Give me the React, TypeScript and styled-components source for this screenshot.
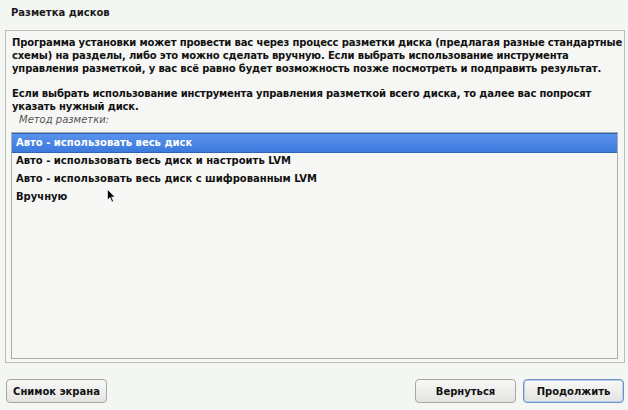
import React from "react";
import styled, { createGlobalStyle } from "styled-components";

const Global = createGlobalStyle`
  html, body { margin: 0; padding: 0; background: #f4f6f3; }
  body { font-family: "DejaVu Sans", "Liberation Sans", sans-serif; }
`;

const Screen = styled.div`
  position: relative;
  width: 628px;
  height: 410px;
  display: flex;
  flex-direction: column;
  background: #f4f6f3;
  color: #111;
  font-size: 10px;
  overflow: hidden;
`;

const Title = styled.div`
  height: 24px;
  line-height: 24px;
  padding: 1px 0 0 11px;
  font-weight: bold;
  font-size: 10px;
  color: #1a1a1a;
`;

const Panel = styled.div`
  margin: 5px 3px 0 5px;
  height: 333px;
  box-sizing: border-box;
  border: 1px solid #b9bcb8;
  background: #f6f7f5;
  display: flex;
  flex-direction: column;
  padding: 5px 6px 3px 5px;
`;

const Para = styled.p<{ $gap?: number }>`
  margin: 0 0 ${(p) => p.$gap ?? 0}px 1px;
  font-weight: bold;
  line-height: 13px;
  letter-spacing: -0.15px;
  white-space: nowrap;
  color: #111;
`;

const Label = styled.div`
  font-style: italic;
  color: #555;
  line-height: 13px;
  padding-left: 8px;
  margin-top: 0px;
  margin-bottom: 6px;
`;

const List = styled.div`
  flex: 1;
  border: 1px solid #a9aca8;
  background: #f7f7f5;
  padding: 0;
  display: flex;
  flex-direction: column;
`;

const Item = styled.div<{ $selected?: boolean }>`
  height: 18px;
  line-height: 18px;
  padding-left: 4px;
  font-weight: bold;
  color: ${(p) => (p.$selected ? "#fff" : "#111")};
  background: ${(p) =>
    p.$selected ? "linear-gradient(#5a93ec, #3b79dd)" : "transparent"};
  border-top: 1px solid ${(p) => (p.$selected ? "#2f63b5" : "transparent")};
  border-bottom: 1px solid ${(p) => (p.$selected ? "#2f63b5" : "transparent")};
  margin-bottom: -2px;
  margin-top: 0;
`;

const ButtonRow = styled.div`
  display: flex;
  align-items: center;
  margin-top: 16px;
  padding: 0 4px 0 6px;
  gap: 7px;
`;

const Spacer = styled.div`
  flex: 1;
`;

const Button = styled.button<{ $focused?: boolean }>`
  width: 101px;
  height: 24px;
  box-sizing: border-box;
  font-family: "DejaVu Sans", "Liberation Sans", sans-serif;
  font-size: 10px;
  font-weight: bold;
  color: #111;
  border: 1px solid ${(p) => (p.$focused ? "#6d94c7" : "#a6a8a5")};
  border-radius: 4px;
  background: linear-gradient(#f8f8f7, #e3e3e1);
  box-shadow: ${(p) => (p.$focused ? "inset 0 0 0 1px #b9cde6" : "none")};
  padding: 0;
`;

const Cursor = styled.svg`
  position: absolute;
  left: 107px;
  top: 189px;
`;

export default function App() {
  return (
    <Screen>
      <Global />
      <Title>Разметка дисков</Title>
      <Panel>
        <Para $gap={12}>
          Программа установки может провести вас через процесс разметки диска (предлагая разные стандартные
          <br />
          схемы) на разделы, либо это можно сделать вручную. Если выбрать использование инструмента
          <br />
          управления разметкой, у вас всё равно будет возможность позже посмотреть и подправить результат.
        </Para>
        <Para>
          Если выбрать использование инструмента управления разметкой всего диска, то далее вас попросят
          <br />
          указать нужный диск.
        </Para>
        <Label>Метод разметки:</Label>
        <List>
          <Item $selected>Авто - использовать весь диск</Item>
          <Item>Авто - использовать весь диск и настроить LVM</Item>
          <Item>Авто - использовать весь диск с шифрованным LVM</Item>
          <Item>Вручную</Item>
        </List>
      </Panel>
      <ButtonRow>
        <Button>Снимок экрана</Button>
        <Spacer />
        <Button>Вернуться</Button>
        <Button $focused>Продолжить</Button>
      </ButtonRow>
      <Cursor width="9" height="14" viewBox="0 0 9 14">
        <path d="M0.5 0.5 L0.5 11 L3 8.5 L5 13 L6.5 12.3 L4.6 8 L8 8 Z" fill="#000" stroke="#fff" strokeWidth="0.6" />
      </Cursor>
    </Screen>
  );
}
